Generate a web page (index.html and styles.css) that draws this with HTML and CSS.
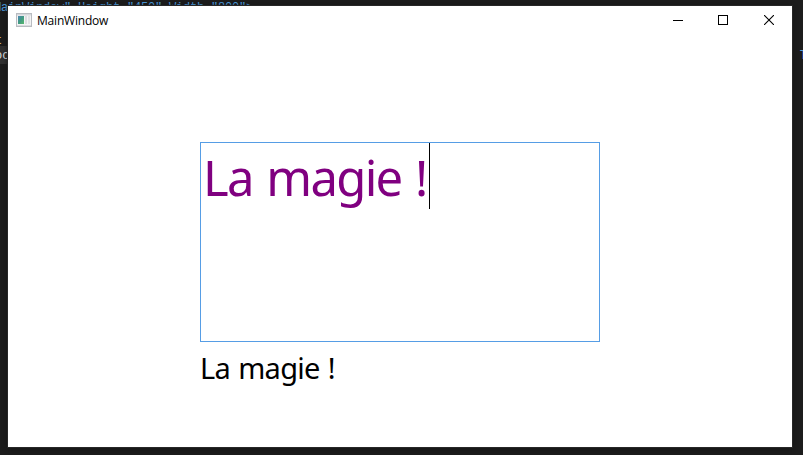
FILE: index.html
```html
<!DOCTYPE html>
<html lang="fr">
<head>
<meta charset="utf-8">
<title>MainWindow</title>
<link rel="stylesheet" href="styles.css">
</head>
<body>
<div class="editor">
  <div class="line first"><span class="attr">MainWindow" Height="450" Width="800"&gt;</span></div>
  <div class="line"></div>
  <div class="line clipped"><span class="tag">t</span></div>
  <div class="line active"><span>oc</span><span class="link">T</span></div>
</div>
<main class="window">
  <header class="titlebar">
    <svg class="app-icon" width="16" height="14" viewBox="0 0 16 14">
      <defs><linearGradient id="pane" x1="0" y1="0" x2="1" y2="1"><stop offset="0" stop-color="#4c86b5"/><stop offset=".5" stop-color="#419a82"/><stop offset="1" stop-color="#58b96b"/></linearGradient></defs>
      <rect x=".5" y=".5" width="15" height="13" fill="#f4f4f5" stroke="#b9bcc1"/>
      <rect x="1" y="1" width="14" height="1.5" fill="#d5d8dc"/>
      <rect x="2" y="3" width="6" height="8" fill="url(#pane)"/>
      <rect x="9" y="3" width="2" height="8" fill="#dcdee1"/>
      <rect x="12" y="3" width="2" height="8" fill="#e1e3e5"/>
      <rect x="1" y="12" width="14" height="1" fill="#dadcdf"/>
    </svg>
    <span class="title">MainWindow</span>
    <div class="controls">
      <svg class="minimize" width="10" height="10" shape-rendering="crispEdges"><path d="M0 5.5H10" stroke="#000"/></svg>
      <svg class="maximize" width="10" height="10" shape-rendering="crispEdges"><rect x=".5" y=".5" width="9" height="9" fill="none" stroke="#000"/></svg>
      <svg width="10" height="10"><path d="M0 0L10 10M10 0L0 10" stroke="#000" stroke-width="1.1"/></svg>
    </div>
  </header>
  <section class="content">
    <div class="textbox"><span class="entry">La magie !</span><i class="caret"></i></div>
    <div class="output">La magie !</div>
  </section>
</main>
</body>
</html>
```
FILE: styles.css
```css
* { box-sizing: border-box; }
body {
  margin: 0;
  width: 803px;
  height: 455px;
  overflow: hidden;
  position: relative;
  background: #1c1c1c;
  font-family: "Noto Sans", "Open Sans", sans-serif;
}
.editor {
  height: 455px;
  overflow: hidden;
  color: #dcdcdc;
  font: 12px/17px "Liberation Mono", monospace;
}
.line { height: 15px; white-space: pre; }
.first { margin-left: -6px; height: 16px; letter-spacing: -.2px; line-height: 16px; }
.attr { color: #4a97d8; }
.clipped { line-height: 20px; }
.tag { color: #d7ba7d; margin-left: -5px; }
.active {
  display: flex;
  justify-content: space-between;
  height: 18px;
  line-height: 20px;
  background: linear-gradient(90deg, #303030 14px, transparent 14px);
  margin-left: -6px;
  width: 812px;
}
.active span:first-child { margin-left: 1px; }
.link { color: #569cd6; margin-right: -1px; }
.window {
  position: absolute;
  left: 8px;
  top: 6px;
  width: 784px;
  height: 441px;
  background: #fff;
  box-shadow: 0 0 0 1px #272727, 0 1px 5px #111;
}
.titlebar {
  display: flex;
  align-items: center;
  height: 28px;
  padding-left: 8px;
}
.title {
  margin-left: 5px;
  font-family: "Open Sans", sans-serif;
  font-size: 12px;
  line-height: 16px;
  letter-spacing: -.2px;
  padding-top: 2px;
}
.controls {
  display: flex;
  margin-left: auto;
  padding-right: 18px;
}
.minimize { margin-right: 35px; }
.maximize { margin-right: 36px; }
.content { padding: 108px 0 0 192px; }
.textbox {
  display: flex;
  width: 400px;
  height: 200px;
  border: 1px solid #569de5;
  padding-left: 2px;
}
.entry {
  color: #800080;
  font-size: 49px;
  line-height: 69px;
  width: 226px;
  white-space: nowrap;
  letter-spacing: -1.7px;
  word-spacing: 2.5px;
}
.caret { width: 1px; height: 66px; background: #000; }
.output {
  margin-top: 6px;
  font-size: 29px;
  line-height: 40px;
  letter-spacing: -.75px;
  word-spacing: 1.5px;
}
```
